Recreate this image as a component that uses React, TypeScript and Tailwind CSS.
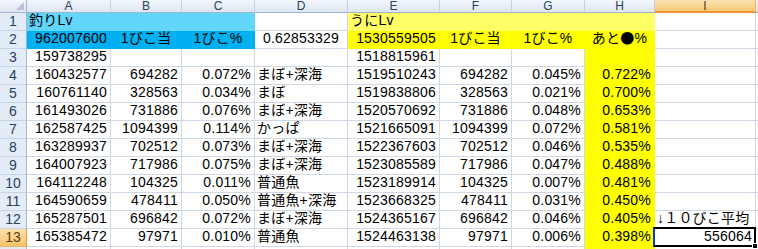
import React from 'react';

type Cell = { t?: React.ReactNode; a?: 'l' | 'r' | 'c'; fill?: string };

const LB = 'bg-[#62d6fb]';
const BL = 'bg-[#00b0f0]';
const LY = 'bg-[#ffff66]';
const YE = 'bg-[#ffff00]';

const cjk = { fontFamily: '"Noto Sans CJK JP", sans-serif' };

const letters = ['A', 'B', 'C', 'D', 'E', 'F', 'G', 'H', 'I', ''];

const data: [string, string, string, string, string, string, string, string][] = [
  ['160432577', '694282', '0.072%', 'まぼ+深海', '1519510243', '694282', '0.045%', '0.722%'],
  ['160761140', '328563', '0.034%', 'まぼ', '1519838806', '328563', '0.021%', '0.700%'],
  ['161493026', '731886', '0.076%', 'まぼ+深海', '1520570692', '731886', '0.048%', '0.653%'],
  ['162587425', '1094399', '0.114%', 'かっぱ', '1521665091', '1094399', '0.072%', '0.581%'],
  ['163289937', '702512', '0.073%', 'まぼ+深海', '1522367603', '702512', '0.046%', '0.535%'],
  ['164007923', '717986', '0.075%', 'まぼ+深海', '1523085589', '717986', '0.047%', '0.488%'],
  ['164112248', '104325', '0.011%', '普通魚', '1523189914', '104325', '0.007%', '0.481%'],
  ['164590659', '478411', '0.050%', '普通魚+深海', '1523668325', '478411', '0.031%', '0.450%'],
  ['165287501', '696842', '0.072%', 'まぼ+深海', '1524365167', '696842', '0.046%', '0.405%'],
  ['165385472', '97971', '0.010%', '普通魚', '1524463138', '97971', '0.006%', '0.398%'],
];

const rows: Cell[][] = [
  [
    { t: '釣りLv', a: 'l', fill: LB },
    { fill: LB },
    { fill: LB },
    {},
    { t: 'うにLv', a: 'l', fill: LY },
    { fill: LY },
    { fill: LY },
    { fill: LY },
    {},
    {},
  ],
  [
    { t: '962007600', a: 'r', fill: BL },
    { t: '1びこ当', a: 'c', fill: BL },
    { t: '1びこ%', a: 'c', fill: BL },
    { t: '0.62853329', a: 'c' },
    { t: '1530559505', a: 'r', fill: YE },
    { t: '1びこ当', a: 'c', fill: YE },
    { t: '1びこ%', a: 'c', fill: YE },
    {
      t: (
        <>
          あと<span style={cjk}>●</span>%
        </>
      ),
      a: 'c',
      fill: YE,
    },
    {},
    {},
  ],
  [
    { t: '159738295', a: 'r' },
    {},
    {},
    {},
    { t: '1518815961', a: 'r' },
    {},
    {},
    { fill: YE },
    {},
    {},
  ],
  ...data.map((d, i) => [
    { t: d[0], a: 'r' as const },
    { t: d[1], a: 'r' as const },
    { t: d[2], a: 'r' as const },
    { t: d[3], a: 'l' as const },
    { t: d[4], a: 'r' as const },
    { t: d[5], a: 'r' as const },
    { t: d[6], a: 'r' as const },
    { t: d[7], a: 'r' as const, fill: YE },
    i === 8
      ? { t: '↓１０びこ平均', a: 'l' as const }
      : i === 9
        ? { t: '556064', a: 'r' as const }
        : {},
    {},
  ]),
  [{}, {}, {}, {}, {}, {}, {}, { fill: YE }, {}, {}],
];

const alignCls = { l: 'justify-start pl-[2px]', r: 'justify-end pr-[3px]', c: 'justify-center' };

function GridCell({ c, selected }: { c: Cell; selected?: boolean }) {
  return (
    <div
      className={`relative flex items-end overflow-visible whitespace-nowrap border-r border-b leading-[17px] ${
        c.fill ? `${c.fill} border-transparent` : 'bg-white border-[#d0d7e5]'
      } ${c.a ? alignCls[c.a] : ''}`}
    >
      {c.t && <span className="relative z-10 pb-[1px] tracking-[0.2px]">{c.t}</span>}
      {selected && (
        <>
          <div className="absolute -left-[2px] -top-[2px] -right-[1px] -bottom-[1px] border-2 border-black border-l-[#1432e6] z-20" />
          <div className="absolute -right-[3px] -bottom-[3px] w-[6px] h-[6px] bg-black border border-white z-30" />
        </>
      )}
    </div>
  );
}

export default function App() {
  return (
    <div
      className="w-[758px] h-[249px] overflow-hidden bg-white text-[14px] text-black"
      style={{ fontFamily: '"Liberation Sans", "Noto Sans CJK JP", sans-serif' }}
    >
      <div className="grid grid-cols-[27px_84px_71px_73px_93px_92px_72px_73px_70px_101px_20px] grid-rows-[13px_repeat(14,18px)]">
        {/* corner */}
        <div className="relative bg-linear-to-b from-[#f4f7fb] to-[#dfe6f0] border-r border-b border-[#9eb6ce]">
          <svg className="absolute right-[2px] bottom-[2px]" width="8" height="8" viewBox="0 0 8 8">
            <polygon points="8,0 8,8 0,8" fill="#b7c3d2" />
          </svg>
        </div>
        {letters.map((l, i) => (
          <div
            key={l + i}
            className={`flex items-center justify-center border-r text-[12px] leading-[12px] ${
              l === 'I'
                ? 'bg-linear-to-b from-[#fbe3b4] to-[#f6c772] border-b-2 border-b-[#f29436] border-r-[#e8b466] text-[#5a3a10]'
                : 'bg-linear-to-b from-[#f3f7fc] to-[#dde6f2] border-b border-b-[#9eb6ce] border-r-[#c3d0e0] text-[#27415f]'
            }`}
          >
            {l}
          </div>
        ))}
        {rows.map((r, ri) => (
          <React.Fragment key={ri}>
            <div
              className={`flex items-center justify-center border-r border-b leading-[17px] ${
                ri === 12
                  ? 'bg-linear-to-b from-[#fbe0a8] to-[#f6c46a] border-r-[#f29436] border-b-[#e8b466] text-[#5a3a10]'
                  : 'bg-[#e4ecf7] border-r-[#9eb6ce] border-b-[#c5d3e4] text-[#27415f]'
              }`}
            >
              {ri < 13 ? ri + 1 : ''}
            </div>
            {r.map((c, ci) => (
              <GridCell key={ci} c={c} selected={ri === 12 && ci === 8} />
            ))}
          </React.Fragment>
        ))}
      </div>
    </div>
  );
}
